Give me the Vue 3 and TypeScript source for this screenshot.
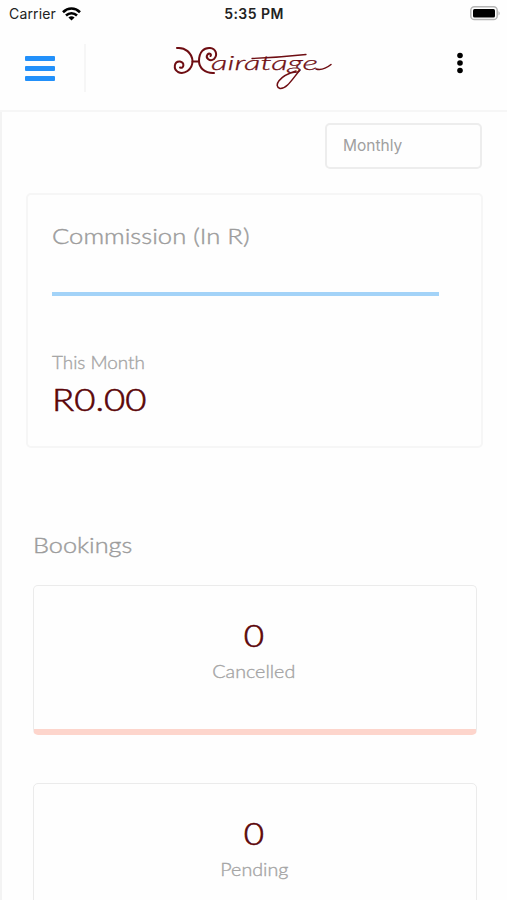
<script setup lang="ts">
interface Booking {
  label: string
  count: number
  kind: string
}

const bookings: Booking[] = [
  { label: 'Cancelled', count: 0, kind: 'cancelled' },
  { label: 'Pending', count: 0, kind: 'pending' },
]
</script>

<template>
  <div class="screen">
    <div class="status">
      <div class="carrier">
        <span>Carrier</span>
        <svg width="19" height="14" viewBox="0 0 19 14" fill="none" stroke="#000" stroke-width="2.6">
          <path d="M1 5.2C6 .3 13 .3 18 5.2" />
          <path d="M4 8.5C7.2 5.5 11.8 5.5 15 8.5" />
          <path d="M6.4 10.4Q9.5 8 12.6 10.4L9.5 13.5Z" fill="#000" stroke="none" />
        </svg>
      </div>
      <span class="clock">5:35 PM</span>
      <svg class="battery" width="31" height="15" viewBox="0 0 31 15">
        <rect x=".8" y=".8" width="26.4" height="12.8" rx="3.6" fill="#fff" stroke="#b5b5b5" stroke-width="1.5" />
        <rect x="3" y="3" width="22" height="8.4" rx="1.5" />
        <path d="M28.5 4.9Q31 7.2 28.5 9.5Z" fill="#b5b5b5" />
      </svg>
    </div>

    <header class="bar">
      <button class="menu" aria-label="Menu"><i /><i /><i /></button>
      <span class="divider" />
      <svg class="logo" width="162" height="48" viewBox="0 0 162 48" fill="none" stroke="#6e0d12" stroke-linecap="round">
        <g stroke-width="2">
          <path d="M5 5C13 4 20 10 20.500 18C20.500 27 12 32 6 29C1 26 2 18 8 18.500C13 19.500 12 26 8 24.500" />
          <path d="M20.500 18.500H27" />
          <path d="M42 30C33 30.500 27 25 27 18C27 9 32 4.500 38 5C44 5.500 46 12 42 16C38 19 33 15 35.500 11.500C37.500 9.500 40 11.500 38.500 13" />
        </g>
        <text x="39" y="26.500" textLength="107" lengthAdjust="spacingAndGlyphs">airatage</text>
        <path d="M80 15.500Q106 14.500 134 11.500" stroke-width="1.300" />
        <path d="M128 27C121 35 115 46 108 45.500C101 43 107 33 124 28" stroke-width="1.500" />
        <path d="M144 26Q151 28 159 21.500" stroke-width="1.500" />
      </svg>
      <svg class="more" width="8" height="22" viewBox="0 0 8 22">
        <circle cx="4" cy="3.500" r="2.800" /><circle cx="4" cy="11" r="2.800" /><circle cx="4" cy="18.500" r="2.800" />
      </svg>
    </header>

    <main class="content">
      <div class="filter">Monthly</div>

      <section class="commission">
        <h2 class="title"><span class="wide t1">Commission (In R)</span></h2>
        <div class="line" />
        <div class="caption"><span class="wide t2">This Month</span></div>
        <div class="amount"><span class="wide t3">R0.00</span></div>
      </section>

      <section class="bookings">
        <h2 class="title"><span class="wide t4">Bookings</span></h2>
        <article v-for="b in bookings" :key="b.label" class="card" :class="b.kind">
          <div class="amount"><span class="wide zero">{{ b.count }}</span></div>
          <div class="caption"><span class="wide">{{ b.label }}</span></div>
        </article>
      </section>
    </main>
  </div>
</template>

<style>
body { background: #fefefe; overflow: hidden; }
</style>

<style scoped>
.screen {
  box-sizing: border-box;
  width: 507px;
  height: 900px;
  overflow: hidden;
  display: flex;
  flex-direction: column;
  background: #fefefe;
  font-family: Lato, "Liberation Sans", sans-serif;
}
.status {
  flex: none;
  height: 27px;
  display: grid;
  grid-template-columns: 1fr auto 1fr;
  align-items: center;
  padding: 0 6px 0 9px;
  box-sizing: border-box;
  font: 400 14px/27px Inter, sans-serif;
  color: #222;
}
.carrier { display: flex; align-items: center; gap: 6px; letter-spacing: .15px; }
.clock { font-weight: 600; letter-spacing: .45px; margin-right: 2px; }
.battery { justify-self: end; }
.bar {
  flex: none;
  box-sizing: border-box;
  height: 85px;
  display: flex;
  align-items: flex-start;
  padding: 17px 43px 0 25px;
  border-bottom: 2px solid #f6f6f6;
}
.menu {
  display: flex;
  flex-direction: column;
  gap: 5px;
  margin: 12px 0 0;
  padding: 0;
  border: 0;
  background: none;
}
.menu i { width: 30px; height: 5px; border-radius: 1px; background: #2290fa; }
.divider { width: 2px; height: 48px; margin-left: 29px; background: #f6f6f6; }
.logo { margin: -1px 0 0 86px; }
.logo text {
  font: italic 300 20px Lato, sans-serif;
  fill: #6e0d12;
  stroke: #6e0d12;
  stroke-width: .25px;
}
.more { margin: 8px 0 0 auto; }
.content {
  flex: 1;
  box-sizing: border-box;
  border-left: 2px solid #f3f3f3;
  padding: 11px 24px 0;
}
.filter {
  box-sizing: border-box;
  width: 157px;
  height: 46px;
  margin: 0 1px 0 auto;
  padding-left: 16px;
  border: 2px solid #ededed;
  border-radius: 5px;
  font: 400 15.5px/42px Inter, sans-serif;
  color: #a0a0a0;
}
.commission {
  box-sizing: border-box;
  width: 457px;
  height: 255px;
  margin-top: 24px;
  padding: 28px 24px 0;
  border: 2px solid #f6f6f6;
  border-radius: 5px;
}
.title {
  margin: 0;
  font-weight: 300;
  font-size: 22px;
  line-height: 26px;
  color: #9c9c9c;
  -webkit-text-stroke: .4px #9c9c9c;
}
.wide { display: inline-block; transform-origin: left; white-space: nowrap; }
.t1 { transform: scaleX(1.165); }
.t2 { transform: scaleX(1.11); }
.t3 { transform: scaleX(1.18); }
.t4 { transform: scaleX(1.15); }
.line { width: 387px; height: 4px; margin-top: 43px; background: #a3d3f8; }
.caption {
  font-weight: 300;
  font-size: 17px;
  line-height: 20px;
  color: #a5a5a5;
  -webkit-text-stroke: .35px #a5a5a5;
}
.amount {
  font-weight: 300;
  font-size: 31px;
  line-height: 38px;
  color: #5b0508;
  -webkit-text-stroke: .6px #5b0508;
}
.commission .caption { margin-top: 57px; }
.commission .amount { margin-top: 7px; }
.bookings { padding: 84px 5px 0 7px; }
.card {
  box-sizing: border-box;
  width: 444px;
  height: 150px;
  margin-top: 27px;
  padding-top: 30px;
  border: 1px solid #ebebeb;
  border-radius: 5px;
  text-align: center;
}
.card .caption { margin-top: 8px; }
.card .wide { transform-origin: center; transform: translateX(-1px) scaleX(1.16); }
.card .zero { transform: translateX(-1px) scaleX(1.13); }
.card.cancelled { border-bottom: 6px solid #fdd5cc; }
.card.pending { margin-top: 48px; }
</style>
